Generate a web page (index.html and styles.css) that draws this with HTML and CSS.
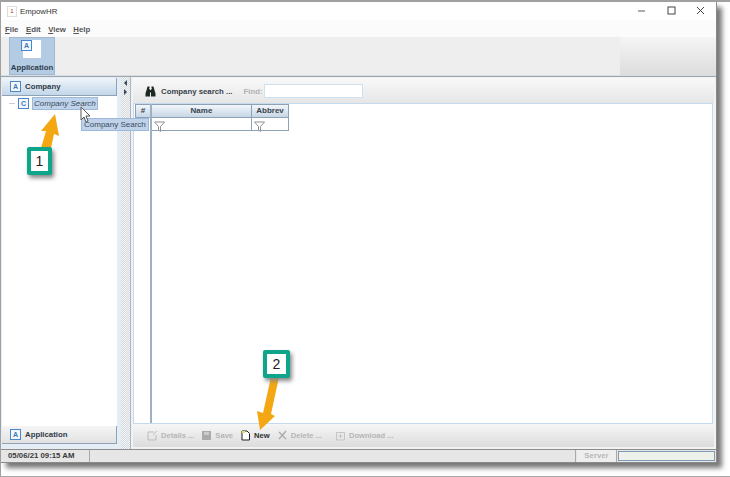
FILE: index.html
```html
<!DOCTYPE html>
<html>
    <head>
        <title>EmpowHR</title>
        <link rel="stylesheet" href="styles.css">
    </head>
    <body>
        <div class="shot">
            <div class="window">
                <!-- title bar -->
                <div class="titlebar">
                    <span class="appicon">1</span>
                    <span class="apptitle">EmpowHR</span>
                    <span class="winbtns">
                        <svg width="12" height="12" viewBox="0 0 12 12"><path d="M1 6h7" stroke="#777" stroke-width="1.2"/></svg>
                        <svg width="12" height="12" viewBox="0 0 12 12"><rect x="2" y="2" width="7" height="7" fill="none" stroke="#444" stroke-width="1"/></svg>
                        <svg width="12" height="12" viewBox="0 0 12 12"><path d="M2 2l7 7M9 2l-7 7" stroke="#444" stroke-width="1"/></svg>
                    </span>
                </div>

                <!-- menu -->
                <div class="menubar">
                    <span><u>F</u>ile</span>
                    <span><u>E</u>dit</span>
                    <span><u>V</u>iew</span>
                    <span><u>H</u>elp</span>
                </div>

                <!-- ribbon -->
                <div class="ribbon">
                    <div class="ribbon-panel">
                        <div class="appbtn">
                            <div class="appbtn-pic"><span class="badge">A</span></div>
                            <div class="appbtn-label">Application</div>
                        </div>
                    </div>
                </div>

                <div class="main">
                    <div class="side">
                        <div class="side-head"><span class="badge">A</span>Company</div>
                        <div class="tree">
                            <div class="tree-row">
                                <span class="tree-dash"></span>
                                <span class="badge">C</span>
                                <span class="tree-item">Company Search</span>
                            </div>
                        </div>
                        <div class="side-foot"><span class="badge">A</span>Application</div>
                    </div>

                    <div class="splitter">
                        <span class="arrow-l"></span>
                        <span class="arrow-r"></span>
                    </div>

                    <div class="content">
                        <div class="toolbar">
                            <svg class="binoc" width="12" height="11" viewBox="0 0 12 11"><path d="M2.500 .5h2v1.500h-.5l1 2h1l1-2h-.5v-1.500h2l.5 2 1.500 5v3h-4.500v-4h-1v4h-4.500v-3l1.500-5z" fill="#1d2a22"/></svg>
                            <span class="toolbar-title">Company search ...</span>
                            <span class="find-label">Find:</span>
                            <span class="find-box"></span>
                        </div>

                        <div class="grid-area">
                            <div class="grid-rownums">
                                <div class="th th-num">#</div>
                            </div>
                            <div class="grid-cols">
                                <div class="grid-row">
                                    <div class="th th-name">Name</div>
                                    <div class="th th-abbrev">Abbrev</div>
                                </div>
                                <div class="grid-row filter-row">
                                    <div class="filter-cell cell-name">
                                        <svg width="11" height="11" viewBox="0 0 11 11"><path d="M.5 1h10l-4 4.500v5l-2-1.500v-3.500z" fill="#fff" stroke="#8b8f92"/></svg>
                                    </div>
                                    <div class="filter-cell cell-abbrev">
                                        <svg width="11" height="11" viewBox="0 0 11 11"><path d="M.5 1h10l-4 4.500v5l-2-1.500v-3.500z" fill="#fff" stroke="#8b8f92"/></svg>
                                    </div>
                                </div>
                            </div>
                        </div>

                        <div class="actions">
                            <span class="action off">
                                <svg width="11" height="11" viewBox="0 0 11 11"><path d="M7 2h-6v8h8v-5M6 5l4-4" fill="none" stroke="#bbb"/></svg>
                                Details ...
                            </span>
                            <span class="action off">
                                <svg width="11" height="11" viewBox="0 0 11 11"><rect x="1" y="1" width="9" height="9" fill="#aaa"/><rect x="3" y="2" width="5" height="3" fill="#ccc"/></svg>
                                Save
                            </span>
                            <span class="action on">
                                <svg width="11" height="11" viewBox="0 0 11 11"><path d="M2 1h5l2.500 2.500v6.500h-7.500z" fill="#fff" stroke="#222"/><path d="M2 1h3v2h-3z" fill="#e8e060"/></svg>
                                New
                            </span>
                            <span class="action off">
                                <svg width="11" height="11" viewBox="0 0 11 11"><path d="M2 2l7 7M9 1l-7 8" fill="none" stroke="#aaa" stroke-width="1.300"/></svg>
                                Delete ...
                            </span>
                            <span class="action off dl">
                                <svg width="11" height="11" viewBox="0 0 11 11"><path d="M1.500 2.500h8v7.500h-8z" fill="none" stroke="#c4c4c4"/><path d="M5.500 4v4M3.500 6h4" stroke="#c4c4c4"/></svg>
                                Download ...
                            </span>
                        </div>
                    </div>
                </div>

                <!-- status bar -->
                <div class="statusbar">
                    <div class="st st-date">05/06/21 09:15 AM</div>
                    <div class="st st-fill"></div>
                    <div class="st st-server">Server</div>
                    <div class="st st-progress"></div>
                </div>
            </div>

            <!-- things on top of the screenshot -->
            <div class="tooltip">Company Search</div>
            <svg class="pointer" width="11" height="17" viewBox="0 0 11 17"><path d="M1 1v13l3-3 2 5 2-1-2-5h4z" fill="#fff" stroke="#555"/></svg>

            <svg class="callout-arrow a1" width="30" height="40" viewBox="0 0 30 40"><path d="M19 2l4 22-5-2-3 14h-10l5-17-5 0z" fill="#f3a712"/></svg>
            <div class="callout c1">1</div>
            <svg class="callout-arrow a2" width="30" height="60" viewBox="0 0 30 60"><path d="M17 2h8l-8 37 4 2-15 14-3-19 6 2z" fill="#f3a712"/></svg>
            <div class="callout c2">2</div>
        </div>
    </body>
</html>
```

FILE: styles.css
```css
html, body {
    margin: 0;
    padding: 0;
    background-color: #fff;
}

/* outer picture with its thin grey frame */
.shot {
    position: relative;
    width: 730px;
    height: 477px;
    box-sizing: border-box;
    overflow: hidden;
    border-top: 2px solid #a0a0a0;
    border-left: 1px solid #a0a0a0;
    border-bottom: 1px solid #a8a8a8;
    font-family: "Liberation Sans", Arial, sans-serif;
}

.window {
    width: 716px;
    height: 461px;
    display: flex;
    flex-direction: column;
    background-color: #eeeeee;
    border-right: 1px solid #8a8a8a;
    border-bottom: 1px solid #8a8a8a;
    box-sizing: border-box;
    box-shadow: 5px 5px 5px #777;
}

/* title bar */
.titlebar {
    height: 18px;
    flex: none;
    display: flex;
    align-items: center;
    padding: 0 6px;
    background-color: #fff;
    color: #333;
}
.appicon {
    width: 8px;
    height: 9px;
    border: 1px solid #ddd;
    font-size: 6px;
    line-height: 9px;
    text-align: center;
    margin-right: 3px;
    color: #a33;
}
.apptitle {
    font-size: 7.800px;
}
.winbtns {
    margin-left: auto;
    display: flex;
    gap: 17px;
    margin-right: 3px;
}

/* menu */
.menubar {
    height: 17px;
    flex: none;
    display: flex;
    gap: 7.500px;
    align-items: center;
    padding-left: 4px;
    padding-top: 1px;
    box-sizing: border-box;
    background-color: #fbfbfb;
    font-size: 7.800px;
    font-weight: bold;
    color: #555;
}

/* ribbon */
.ribbon {
    height: 40px;
    flex: none;
    background: linear-gradient(#f5f5f5, #dcdcdc);
    border-bottom: 1px solid #9aa7b3;
    box-sizing: border-box;
}
.ribbon-panel {
    width: 619px;
    height: 38px;
    background-color: #eeeeee;
    padding-left: 8px;
    box-sizing: border-box;
}
.appbtn {
    width: 46px;
    height: 38px;
    background-color: #b4cbe4;
    border: 1px solid #9fb7d2;
    box-sizing: border-box;
    text-align: center;
}
.appbtn-pic {
    width: 18px;
    height: 18px;
    margin: 3px 0 0 13px;
    background-color: #fff;
    position: relative;
}
.appbtn-pic .badge {
    display: block;
    margin: -1px 0 0 -2px;
}
.appbtn-label {
    font-size: 7.800px;
    font-weight: bold;
    color: #2c3a4a;
    margin-top: 5px;
}

/* blue square with a letter */
.badge {
    display: inline-block;
    flex: none;
    width: 9px;
    height: 9px;
    border: 1px solid #4a86d0;
    background-color: #f3f7fc;
    color: #3f76b8;
    font-size: 7px;
    font-weight: bold;
    line-height: 9px;
    text-align: center;
    font-family: "Liberation Sans", Arial, sans-serif;
}

.main {
    flex: 1;
    display: flex;
    min-height: 0;
}

/* left panel */
.side {
    width: 116px;
    flex: none;
    display: flex;
    flex-direction: column;
    padding: 1px 0 5px 1px;
    box-sizing: border-box;
    background-color: #e4edf5;
}
.side-head, .side-foot {
    height: 18px;
    flex: none;
    display: flex;
    align-items: center;
    gap: 4px;
    padding-left: 8px;
    font-size: 7.800px;
    font-weight: bold;
    color: #2f3a45;
    box-sizing: border-box;
    border-right: 1px solid #8fa3b6;
    border-bottom: 1px solid #8fa3b6;
}
.side-head {
    background: linear-gradient(#f0f5fa, #c3d6e9);
}
.side-foot {
    background: linear-gradient(#f5f5f5, #e2e2e2);
}
.tree {
    flex: 1;
    background-color: #fff;
}
.tree-row {
    display: flex;
    align-items: center;
    height: 15px;
    padding-left: 7px;
}
.tree-dash {
    width: 6px;
    border-top: 1px solid #ccd;
    margin-right: 3px;
}
.tree-item {
    margin-left: 3px;
    padding: 0 1px;
    height: 13px;
    background-color: #bfd3ea;
    border: 1px solid #9db8d8;
    box-sizing: border-box;
    font-size: 8px;
    font-style: italic;
    color: #3b4a5c;
    line-height: 11px;
    white-space: nowrap;
}

/* dotted bar between the panels */
.splitter {
    width: 14px;
    flex: none;
    position: relative;
    background: repeating-conic-gradient(#d5dade 0 25%, #f3f5f6 0 50%) 0 0 / 2px 2px;
    border-left: 4px solid #e4edf5;
    border-right: 1px solid #aab6c2;
    box-sizing: border-box;
}
.arrow-l, .arrow-r {
    position: absolute;
    left: 3px;
    width: 0;
    height: 0;
    border-top: 3px solid transparent;
    border-bottom: 3px solid transparent;
}
.arrow-l {
    top: 3px;
    border-right: 3px solid #37475a;
}
.arrow-r {
    top: 12px;
    border-left: 3px solid #37475a;
}

/* right side */
.content {
    flex: 1;
    min-width: 0;
    display: flex;
    flex-direction: column;
    background-color: #f2f2f2;
    padding: 1px 2px 2px 2px;
}
.toolbar {
    height: 25px;
    flex: none;
    display: flex;
    align-items: center;
    padding-left: 12px;
    padding-top: 2px;
    background: linear-gradient(#f9f9f9, #e6e6e6);
    box-sizing: border-box;
}
.toolbar-title {
    margin-left: 4px;
    font-size: 7.800px;
    font-weight: bold;
    color: #37424c;
}
.find-label {
    margin-left: 11px;
    font-size: 7.800px;
    font-weight: bold;
    color: #b0b0b0;
}
.find-box {
    width: 97px;
    height: 12px;
    margin-left: 1px;
    margin-top: -2px;
    background-color: #fff;
    border: 1px solid #cfe0ef;
}

.grid-area {
    flex: 1;
    min-height: 0;
    display: flex;
    background-color: #fff;
    border: 1px solid #c4d9ec;
    box-sizing: border-box;
    padding-left: 1px;
    margin-right: 1px;
}
.grid-rownums {
    width: 15px;
    flex: none;
    border-right: 2px solid #9eb1c4;
    box-sizing: content-box;
}
.grid-row {
    display: flex;
}
.th {
    height: 14px;
    line-height: 12px;
    text-align: center;
    font-size: 8px;
    font-weight: bold;
    color: #37424c;
    background: linear-gradient(#f2f6fa, #c6d6e6);
    box-sizing: border-box;
    border-bottom: 1px solid #8ea2b5;
    border-top: 1px solid #8ea2b5;
}
.th-num {
    width: 15px;
    border-left: 1px solid #8ea2b5;
}
.th-name {
    width: 100px;
    border-right: 1px solid #8ea2b5;
}
.th-abbrev {
    width: 37px;
    border-right: 1px solid #8ea2b5;
}
.filter-cell {
    height: 13px;
    background-color: #fff;
    box-sizing: border-box;
    border-bottom: 1px solid #8ea2b5;
    border-right: 1px solid #8ea2b5;
    padding-left: 2px;
}
.cell-name {
    width: 100px;
}
.cell-abbrev {
    width: 37px;
}

/* bottom buttons */
.actions {
    height: 23px;
    flex: none;
    display: flex;
    align-items: center;
    padding-left: 14px;
    gap: 7px;
    background: linear-gradient(#f6f6f6, #dcdcdc);
    box-sizing: border-box;
}
.action {
    display: flex;
    align-items: center;
    gap: 3px;
    font-size: 7.600px;
    font-weight: bold;
}
.off {
    color: #b6b6b6;
}
.on {
    color: #2e2e2e;
}
.dl {
    margin-left: 6px;
}

/* status bar */
.statusbar {
    height: 13px;
    flex: none;
    display: flex;
    gap: 1px;
    padding: 0 1px;
    background-color: #e6e6e6;
    border-top: 1px solid #8c8c8c;
    box-sizing: border-box;
}
.st {
    box-sizing: border-box;
    height: 12px;
    line-height: 12px;
    border-right: 1px solid #aaa;
    font-size: 7.800px;
}
.st-date {
    width: 88px;
    padding-left: 6px;
    font-weight: bold;
    color: #3a3a3a;
    white-space: nowrap;
}
.st-fill {
    flex: 1;
}
.st-server {
    width: 40px;
    text-align: center;
    font-weight: bold;
    color: #b8b8b8;
    background-color: #eee;
}
.st-progress {
    width: 97px;
    height: 10px;
    margin-top: 1px;
    border: 1px solid #7f9bb8;
    background-color: #eef0ea;
}

/* tooltip and mouse pointer */
.tooltip {
    position: absolute;
    left: 80px;
    top: 116px;
    height: 11px;
    line-height: 11px;
    padding: 0 2px;
    background-color: #bfd2e9;
    border: 1px solid #9db8d8;
    font-size: 8px;
    color: #3a4c60;
    white-space: nowrap;
}
.pointer {
    position: absolute;
    left: 79px;
    top: 104px;
}

/* numbered marks */
.callout {
    position: absolute;
    height: 20px;
    border: 4px solid #0fa58a;
    border-radius: 2px;
    background-color: #fff;
    font-size: 14px;
    line-height: 20px;
    text-align: center;
    color: #222;
    box-shadow: 2px 3px 4px #888;
}
.c1 {
    left: 26px;
    top: 145px;
    width: 17px;
}
.c2 {
    left: 262px;
    top: 348px;
    width: 19px;
}
.callout-arrow {
    position: absolute;
}
.a1 {
    left: 35px;
    top: 110px;
}
.a2 {
    left: 253px;
    top: 373px;
}
```
